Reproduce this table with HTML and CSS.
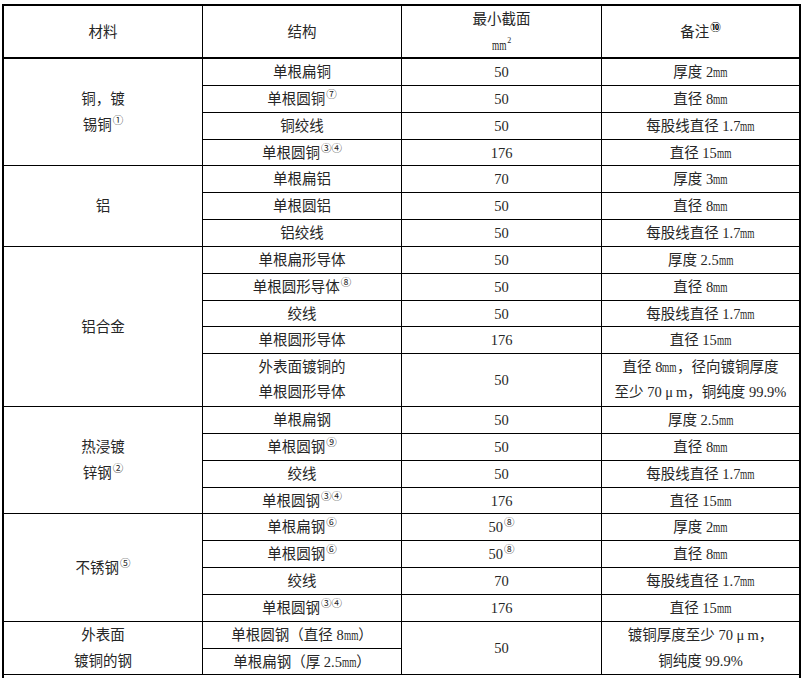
FILE: index.html
```html
<!DOCTYPE html>
<html lang="zh">
<head>
<meta charset="utf-8">
<title>材料、结构与最小截面</title>
<link rel="stylesheet" href="styles.css">
</head>
<body>
<div class="tbl">
  <div class="c h"><span>材料</span></div>
  <div class="c h"><span>结构</span></div>
  <div class="c h"><span>最小截面<br><span class="u">mm</span><sup class="sq">2</sup></span></div>
  <div class="c h"><span>备注<span class="s b">⑩</span></span></div>

  <div class="c r4"><span>铜，镀<br>锡铜<span class="s">①</span></span></div>
  <div class="c"><span>单根扁铜</span></div><div class="c"><span>50</span></div><div class="c"><span>厚度 2<span class="u">mm</span></span></div>
  <div class="c"><span>单根圆铜<span class="s">⑦</span></span></div><div class="c"><span>50</span></div><div class="c"><span>直径 8<span class="u">mm</span></span></div>
  <div class="c"><span>铜绞线</span></div><div class="c"><span>50</span></div><div class="c"><span>每股线直径 1.7<span class="u">mm</span></span></div>
  <div class="c"><span>单根圆铜<span class="s">③④</span></span></div><div class="c"><span>176</span></div><div class="c"><span>直径 15<span class="u">mm</span></span></div>

  <div class="c r3"><span>铝</span></div>
  <div class="c"><span>单根扁铝</span></div><div class="c"><span>70</span></div><div class="c"><span>厚度 3<span class="u">mm</span></span></div>
  <div class="c"><span>单根圆铝</span></div><div class="c"><span>50</span></div><div class="c"><span>直径 8<span class="u">mm</span></span></div>
  <div class="c"><span>铝绞线</span></div><div class="c"><span>50</span></div><div class="c"><span>每股线直径 1.7<span class="u">mm</span></span></div>

  <div class="c r5"><span>铝合金</span></div>
  <div class="c"><span>单根扁形导体</span></div><div class="c"><span>50</span></div><div class="c"><span>厚度 2.5<span class="u">mm</span></span></div>
  <div class="c"><span>单根圆形导体<span class="s">⑧</span></span></div><div class="c"><span>50</span></div><div class="c"><span>直径 8<span class="u">mm</span></span></div>
  <div class="c"><span>绞线</span></div><div class="c"><span>50</span></div><div class="c"><span>每股线直径 1.7<span class="u">mm</span></span></div>
  <div class="c"><span>单根圆形导体</span></div><div class="c"><span>176</span></div><div class="c"><span>直径 15<span class="u">mm</span></span></div>
  <div class="c tall"><span>外表面镀铜的<br>单根圆形导体</span></div><div class="c"><span>50</span></div><div class="c tall"><span>直径 8<span class="u">mm</span>，径向镀铜厚度<br>至少 70 <span class="mu">μ</span>m，铜纯度 99.9%</span></div>

  <div class="c r4"><span>热浸镀<br>锌钢<span class="s">②</span></span></div>
  <div class="c"><span>单根扁钢</span></div><div class="c"><span>50</span></div><div class="c"><span>厚度 2.5<span class="u">mm</span></span></div>
  <div class="c"><span>单根圆钢<span class="s">⑨</span></span></div><div class="c"><span>50</span></div><div class="c"><span>直径 8<span class="u">mm</span></span></div>
  <div class="c"><span>绞线</span></div><div class="c"><span>50</span></div><div class="c"><span>每股线直径 1.7<span class="u">mm</span></span></div>
  <div class="c"><span>单根圆钢<span class="s">③④</span></span></div><div class="c"><span>176</span></div><div class="c"><span>直径 15<span class="u">mm</span></span></div>

  <div class="c r4"><span>不锈钢<span class="s">⑤</span></span></div>
  <div class="c"><span>单根扁钢<span class="s">⑥</span></span></div><div class="c"><span>50<span class="s">⑧</span></span></div><div class="c"><span>厚度 2<span class="u">mm</span></span></div>
  <div class="c"><span>单根圆钢<span class="s">⑥</span></span></div><div class="c"><span>50<span class="s">⑧</span></span></div><div class="c"><span>直径 8<span class="u">mm</span></span></div>
  <div class="c"><span>绞线</span></div><div class="c"><span>70</span></div><div class="c"><span>每股线直径 1.7<span class="u">mm</span></span></div>
  <div class="c"><span>单根圆钢<span class="s">③④</span></span></div><div class="c"><span>176</span></div><div class="c"><span>直径 15<span class="u">mm</span></span></div>

  <div class="c r2"><span>外表面<br>镀铜的钢</span></div>
  <div class="c"><span>单根圆钢（直径 8<span class="u">mm</span>）</span></div>
  <div class="c r2"><span>50</span></div>
  <div class="c r2"><span>镀铜厚度至少 70 <span class="mu">μ</span>m，<br>铜纯度 99.9%</span></div>
  <div class="c"><span>单根扁钢（厚 2.5<span class="u">mm</span>）</span></div>

  <div class="c foot"></div>
</div>
</body>
</html>
```

FILE: styles.css
```css
html, body {
  margin: 0;
  padding: 0;
  background: #fff;
  overflow: hidden;
  height: 678px;
}

.tbl {
  margin: 4px 0 0 2px;
  width: 795px;
  border: 2px solid #000;
  background: #000;
  display: grid;
  gap: 1px;
  grid-template-columns: 198px 198px 199px 197px;
  grid-template-rows:
    52px
    26px 26px 26px 25px
    26px 26px 26px
    26px 26px 25px 26px 52px
    26px 26px 26px 25px
    26px 26px 26px 26px
    26px 25px
    60px;
  font-family: "Liberation Serif", "Noto Sans CJK SC", serif;
  font-size: 14.5px;
  color: #262626;
}

.c {
  background: #fff;
  display: flex;
  align-items: center;
  justify-content: center;
  text-align: center;
  line-height: 26px;
  white-space: nowrap;
}

.h {
  margin-bottom: 1px;
}

.tall {
  line-height: 25px;
}

.r2 { grid-row: span 2; }
.r3 { grid-row: span 3; }
.r4 { grid-row: span 4; }
.r5 { grid-row: span 5; }

.foot {
  grid-column: 1 / -1;
}

.s {
  font-family: "Noto Sans CJK SC", sans-serif;
  font-size: 10.5px;
  line-height: 0;
  vertical-align: 6px;
  margin-left: 1px;
}

.s.b {
  font-weight: 700;
  color: #000;
}

.u {
  display: inline-block;
  transform: scaleX(0.64);
  transform-origin: 0 50%;
  margin-right: -0.56em;
}

.sq {
  font-size: 8px;
  line-height: 0;
  vertical-align: 7px;
  margin-left: 1px;
}

.mu {
  margin-right: 3px;
}
```
